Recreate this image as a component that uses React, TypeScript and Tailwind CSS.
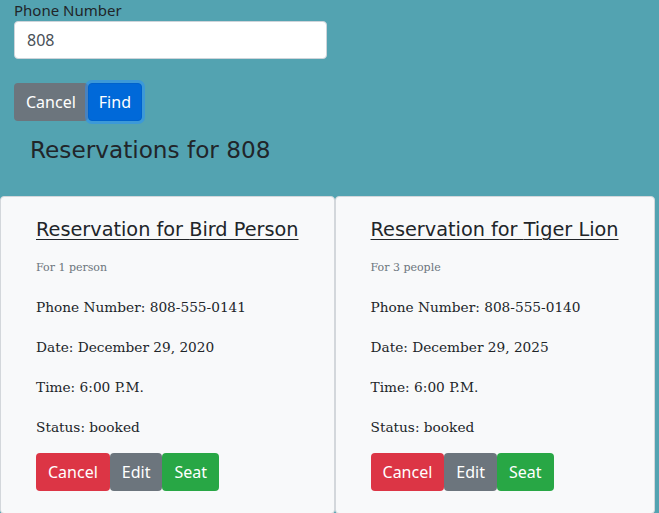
const reservations = [
  {
    name: "Bird Person",
    people: "For 1 person",
    phone: "808-555-0141",
    date: "December 29, 2020",
    time: "6:00 P.M.",
    status: "booked",
  },
  {
    name: "Tiger Lion",
    people: "For 3 people",
    phone: "808-555-0140",
    date: "December 29, 2025",
    time: "6:00 P.M.",
    status: "booked",
  },
];

const uiFont = "font-['Noto_Sans',sans-serif]";
const headFont = "font-['DejaVu_Sans',sans-serif]";
const serifFont = "font-['DejaVu_Serif',serif]";

const ReservationCard: React.FC<{ r: (typeof reservations)[number] }> = ({ r }) => {
  return (
    <div className="flex-none rounded border border-[#d3d7db] bg-[#f8f9fa] px-[35px] pt-[18px] pb-[22px]">
      <h3 className={`${headFont} text-[19.3px] leading-[30px] text-[#212529] underline underline-offset-[3px] decoration-1`}>
        Reservation for {r.name}
      </h3>
      <p className={`${serifFont} mt-[16px] text-[11px] leading-[14px] text-[#6c757d]`}>{r.people}</p>
      <div className={`${serifFont} text-[13.7px] leading-[20px] text-[#212529]`}>
        <p className="mt-[22px]">Phone Number: {r.phone}</p>
        <p className="mt-[20px]">Date: {r.date}</p>
        <p className="mt-[20px]">Time: {r.time}</p>
        <p className="mt-[20px]">Status: {r.status}</p>
      </div>
      <div className={`${uiFont} mt-[16px] flex`}>
        <button className="h-[38px] rounded bg-[#dc3545] px-3 text-[16px] text-white">Cancel</button>
        <button className="h-[38px] rounded bg-[#6c757d] px-3 text-[16px] text-white">Edit</button>
        <button className="h-[38px] rounded bg-[#28a745] px-3 text-[16px] text-white">Seat</button>
      </div>
    </div>
  );
};

export default function App() {
  return (
    <div className="min-h-[513px] bg-[#53a3b1]">
      <div className="px-[14px]">
        <label className={`${uiFont} block text-[15px] leading-[21px] text-[#212529]`}>Phone Number</label>
        <input
          defaultValue="808"
          className={`${uiFont} block h-[38px] w-[313px] rounded border border-[#ced4da] bg-white px-3 text-[16px] text-[#495057] outline-none`}
        />
        <div className={`${uiFont} mt-[24px] flex`}>
          <button className="h-[38px] rounded bg-[#6c757d] px-3 text-[16px] text-white">Cancel</button>
          <button className="h-[38px] rounded border border-[#0062cc] bg-[#0069d9] px-[10px] text-[16px] text-white shadow-[0_0_0_3px_rgba(38,143,255,0.5)]">
            Find
          </button>
        </div>
        <h2 className={`${headFont} ml-[16px] mt-[12px] text-[23.2px] leading-[34px] text-[#212529]`}>
          Reservations for 808
        </h2>
      </div>
      <div className="mt-[29px] flex">
        {reservations.map((r) => (
          <ReservationCard key={r.phone} r={r} />
        ))}
      </div>
    </div>
  );
}
